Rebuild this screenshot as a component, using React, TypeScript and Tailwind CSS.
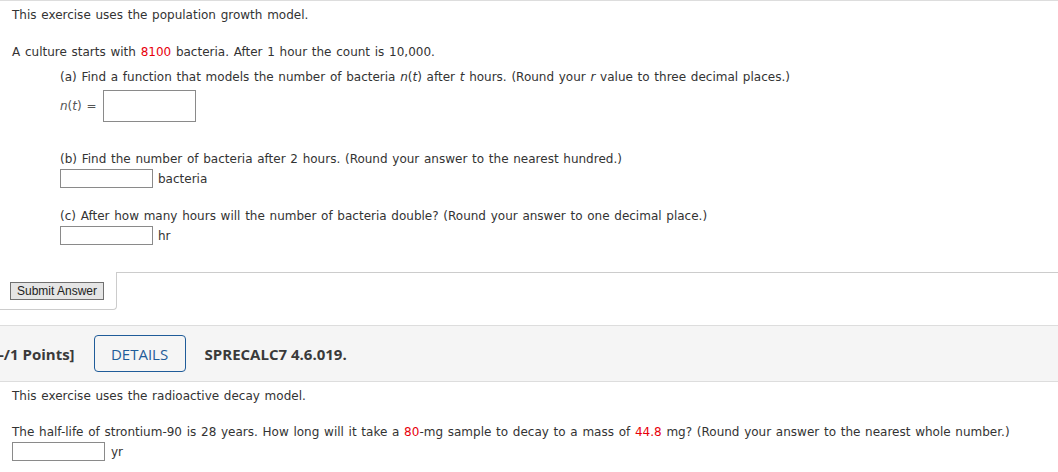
import React from "react";

function Blank({ className = "" }: { className?: string }) {
  return <div className={`border border-[#8a8a8a] bg-white ${className}`} />;
}

export default function App() {
  return (
    <div className="w-[1058px] h-[472px] overflow-hidden bg-white text-[#333] font-['DejaVu_Sans',sans-serif] text-[12px] leading-[18px] [word-spacing:0.9px]">
      {/* first question body */}
      <div className="border-t border-[#ddd] pt-[5px]">
        <p className="pl-3">This exercise uses the population growth model.</p>
        <p className="pl-3 mt-[19px]">
          A culture starts with <span className="text-[#e8000b]">8100</span> bacteria. After 1 hour the count is 10,000.
        </p>

        <div className="pl-[60px] mt-[7px]">
          <p>
            (a) Find a function that models the number of bacteria <i>n</i>(<i>t</i>) after <i>t</i> hours. (Round your <i>r</i> value to three decimal places.)
          </p>
          <div className="flex items-center mt-[4px] h-[32px]">
            <span className="text-[#555] mr-[7px]">
              <i>n</i>(<i>t</i>) =
            </span>
            <Blank className="w-[93px] h-[32px]" />
          </div>

          <p className="mt-[28px]">(b) Find the number of bacteria after 2 hours. (Round your answer to the nearest hundred.)</p>
          <div className="flex items-center mt-[1px]">
            <Blank className="w-[93px] h-[19px]" />
            <span className="ml-[5px]">bacteria</span>
          </div>

          <p className="mt-[19px]">(c) After how many hours will the number of bacteria double? (Round your answer to one decimal place.)</p>
          <div className="flex items-center mt-[1px]">
            <Blank className="w-[93px] h-[19px]" />
            <span className="ml-[5px]">hr</span>
          </div>
        </div>

        {/* submit strip */}
        <div className="flex mt-[27px] h-[38px]">
          <div className="w-[117px] shrink-0 border-r border-b border-[#ccc] rounded-br-[4px] flex items-center pl-[10px]">
            <button className="w-[94px] h-[18px] border border-[#707070] bg-[#e5e5e5] font-['Liberation_Sans',sans-serif] text-[12px] leading-[16px] text-[#222] [word-spacing:normal]">
              Submit Answer
            </button>
          </div>
          <div className="flex-1 border-t border-[#ccc]" />
        </div>
      </div>

      {/* next question header */}
      <div className="mt-[15px] h-[57px] bg-[#f5f5f5] border-y border-[#ddd] flex items-center font-['Open_Sans',sans-serif] text-[15px] text-[#3a3a3a] [word-spacing:normal]">
        <span className="font-bold -ml-[1px]">-/1 Points]</span>
        <span className="ml-[19px] w-[92px] h-[37px] rounded-[4px] border border-[#1f5c99] flex items-center justify-center text-[#1f5c99] font-medium">
          DETAILS
        </span>
        <span className="ml-[19px] font-bold">SPRECALC7 4.6.019.</span>
      </div>

      {/* next question body */}
      <div className="pl-3 pt-[5px]">
        <p>This exercise uses the radioactive decay model.</p>
        <p className="mt-[18px]">
          The half-life of strontium-90 is 28 years. How long will it take a <span className="text-[#e8000b]">80</span>-mg sample to decay to a mass of <span className="text-[#e8000b]">44.8</span> mg? (Round your answer to the nearest whole number.)
        </p>
        <div className="flex items-center mt-[1px]">
          <Blank className="w-[93px] h-[19px]" />
          <span className="ml-[6px]">yr</span>
        </div>
      </div>
    </div>
  );
}
